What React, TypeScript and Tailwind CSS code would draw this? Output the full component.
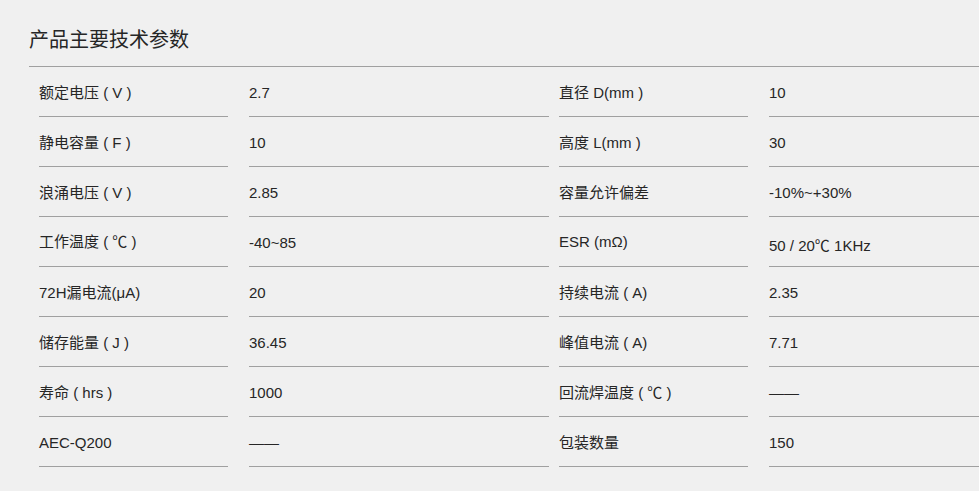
const rows: [string, string, string, string][] = [
  ["额定电压 ( V )", "2.7", "直径 D(mm )", "10"],
  ["静电容量 ( F )", "10", "高度 L(mm )", "30"],
  ["浪涌电压 ( V )", "2.85", "容量允许偏差", "-10%~+30%"],
  ["工作温度 ( ℃ )", "-40~85", "ESR (mΩ)", "50 / 20℃ 1KHz"],
  ["72H漏电流(μA)", "20", "持续电流 ( A)", "2.35"],
  ["储存能量 ( J )", "36.45", "峰值电流 ( A)", "7.71"],
  ["寿命 ( hrs )", "1000", "回流焊温度 ( ℃ )", "——"],
  ["AEC-Q200", "——", "包装数量", "150"],
];

function Cell({ text, className }: { text: string; className: string }) {
  return (
    <div className={`h-[50px] shrink-0 border-b border-[#a0a0a0] flex items-center ${className}`}>
      {text}
    </div>
  );
}

export default function App() {
  return (
    <div
      className="w-[979px] h-[491px] overflow-hidden bg-[#f0f0f0] text-[#262626]"
      style={{ fontFamily: '"Liberation Sans", "Noto Sans CJK SC", sans-serif' }}
    >
      <h2 className="pl-[29px] pt-[28px] text-[20px] leading-[24px] mb-[14px] font-normal">
        产品主要技术参数
      </h2>
      <div className="ml-[29px] border-t border-[#a0a0a0]">
        {rows.map((r, i) => (
          <div key={i} className="flex ml-[10px] text-[15px] leading-[20px]">
            <Cell text={r[0]} className={`w-[189px] ${i === 3 ? "" : "pt-[3px]"}`} />
            <Cell text={r[1]} className="w-[300px] ml-[21px] pt-[2px]" />
            <Cell text={r[2]} className={`w-[189px] ml-[10px] ${r[2].startsWith("ESR") ? "" : "pt-[3px]"}`} />
            <Cell text={r[3]} className={`w-[240px] ml-[21px] ${r[3].includes("KHz") ? "pt-[8px]" : "pt-[2px]"}`} />
          </div>
        ))}
      </div>
    </div>
  );
}
